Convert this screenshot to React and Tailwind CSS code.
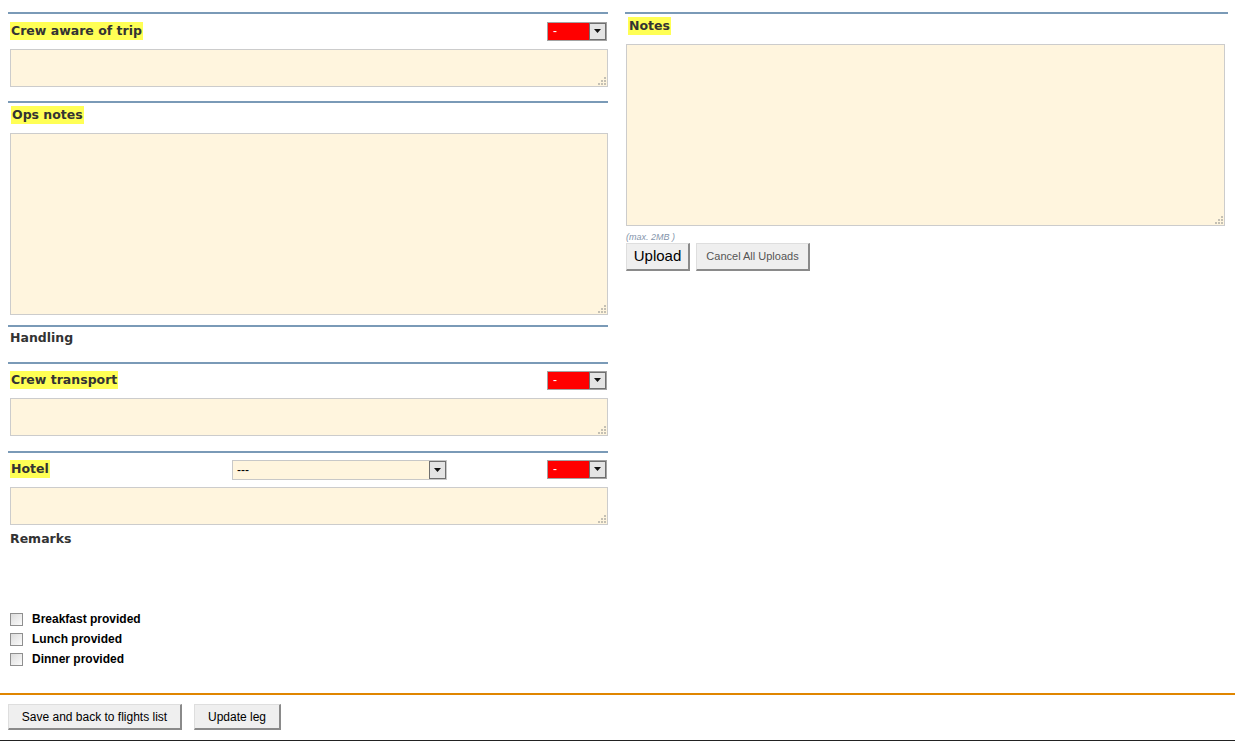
import React from "react";

// small dotted grip drawn in the bottom-right corner of each text box
function Grip() {
  const dots = [
    [6, 0],
    [3, 3],
    [6, 3],
    [0, 6],
    [3, 6],
    [6, 6],
  ];
  return (
    <svg
      className="pointer-events-none absolute right-[2px] bottom-[2px]"
      width="8"
      height="8"
    >
      {dots.map(([x, y], i) => (
        <rect key={i} x={x} y={y} width="2" height="2" fill="#c4c0b4" />
      ))}
    </svg>
  );
}

function NoteBox({ className }) {
  return (
    <div className={"relative " + className}>
      <textarea className="block h-full w-full resize-none border border-[#cccccc] bg-[#fff5de] outline-none" />
      <Grip />
    </div>
  );
}

function Arrow() {
  return (
    <svg width="7" height="4" viewBox="0 0 7 4">
      <path d="M0 0h7L3.5 4z" fill="#111" />
    </svg>
  );
}

function StatusSelect() {
  return (
    <div className="mr-[1px] flex h-[19px] w-[60px] border border-[#a3a3a3] bg-[#ff0000]">
      <span className="flex-1 pl-[5px] font-['Liberation_Sans'] text-[12px] leading-[16px] text-white">
        -
      </span>
      <span className="flex w-[17px] items-center justify-center border border-[#6f6f6f] bg-[#e4e4e4]">
        <Arrow />
      </span>
    </div>
  );
}

function Tag({ children, className = "" }) {
  return (
    <span
      className={
        "block h-[18px] w-fit bg-[#ffff55] px-[1px] font-['DejaVu_Sans'] text-[12.5px] leading-[18px] font-bold text-[#333] " +
        className
      }
    >
      {children}
    </span>
  );
}

function Plain({ children, className = "" }) {
  return (
    <div
      className={
        "h-[18px] pl-[2px] font-['DejaVu_Sans'] text-[12.5px] leading-[18px] font-bold text-[#333] " +
        className
      }
    >
      {children}
    </div>
  );
}

function Check({ label }) {
  return (
    <label className="flex h-[18px] items-center">
      <span className="ml-[2px] h-[13px] w-[13px] border border-[#8f8f8f] bg-gradient-to-br from-[#dcdcdc] to-[#fbfbfb]" />
      <span className="ml-[9px] font-['Liberation_Sans'] text-[12px] font-bold text-black">
        {label}
      </span>
    </label>
  );
}

function Button({ children, className = "text-[12px] text-black" }) {
  return (
    <button
      className={
        "border-t border-l border-r-2 border-b-2 border-t-[#dedede] border-l-[#dedede] border-r-[#8a8a8a] border-b-[#8a8a8a] bg-[#efefef] font-['Liberation_Sans'] " +
        className
      }
    >
      {children}
    </button>
  );
}

export default function App() {
  return (
    <div className="h-[741px] w-[1235px] overflow-hidden bg-white">
      <div className="flex pt-[12px]">
        {/* left column */}
        <div className="ml-[8px] w-[600px]">
          <section className="border-t-2 border-[#7a9ab7] pt-[7px]">
            <div className="flex h-[20px] items-center justify-between">
              <Tag className="ml-[2px]">Crew aware of trip</Tag>
              <StatusSelect />
            </div>
            <NoteBox className="mt-[8px] ml-[2px] h-[38px]" />
          </section>

          <section className="mt-[14px] border-t-2 border-[#7a9ab7] pt-[3px]">
            <Tag className="ml-[3px]">Ops notes</Tag>
            <NoteBox className="mt-[9px] ml-[2px] h-[182px]" />
          </section>

          <section className="mt-[10px] h-[37px] border-t-2 border-[#7a9ab7] pt-[2px]">
            <Plain>Handling</Plain>
          </section>

          <section className="border-t-2 border-[#7a9ab7] pt-[6px]">
            <div className="flex h-[20px] items-center justify-between">
              <Tag className="ml-[2px]">Crew transport</Tag>
              <StatusSelect />
            </div>
            <NoteBox className="mt-[8px] ml-[2px] h-[38px]" />
          </section>

          <section className="mt-[15px] border-t-2 border-[#7a9ab7] pt-[6px]">
            <div className="flex h-[20px] items-center">
              <div className="w-[224px]">
                <Tag className="ml-[2px]">Hotel</Tag>
              </div>
              <div className="mt-[2px] flex h-[20px] w-[215px] border border-[#c8c8c8] bg-[#fff5de]">
                <span className="flex-1 pl-[4px] font-['Liberation_Sans'] text-[12px] leading-[18px] text-black">
                  ---
                </span>
                <span className="flex w-[17px] items-center justify-center border border-[#6f6f6f] bg-[#e4e4e4]">
                  <Arrow />
                </span>
              </div>
              <div className="flex-1" />
              <StatusSelect />
            </div>
            <NoteBox className="mt-[8px] ml-[2px] h-[38px]" />
            <Plain className="mt-[5px]">Remarks</Plain>
          </section>

          <div className="mt-[62px] flex flex-col gap-[2px]">
            <Check label="Breakfast provided" />
            <Check label="Lunch provided" />
            <Check label="Dinner provided" />
          </div>
        </div>

        {/* right column */}
        <div className="ml-[17px] w-[603px]">
          <section className="border-t-2 border-[#7a9ab7] pt-[3px]">
            <Tag className="ml-[3px]">Notes</Tag>
            <NoteBox className="mt-[9px] ml-[1px] h-[182px] w-[599px]" />
            <div className="mt-[5px] ml-[1px] font-['Liberation_Sans'] text-[9px] leading-[12px] text-[#8494ab] italic">
              (max. 2MB )
            </div>
            <div className="ml-[1px] flex gap-[6px]">
              <Button className="h-[28px] w-[64px] text-[15px] text-black">Upload</Button>
              <Button className="h-[28px] w-[114px] text-[11px] text-[#555]">
                Cancel All Uploads
              </Button>
            </div>
          </section>
        </div>
      </div>

      {/* footer */}
      <div className="mt-[25px] h-[48px] border-t-2 border-b border-t-[#e08600] border-b-[#222] pt-[9px]">
        <div className="ml-[8px] flex gap-[12px]">
          <Button className="h-[26px] w-[174px] text-[12px] text-black">
            Save and back to flights list
          </Button>
          <Button className="h-[26px] w-[87px] text-[12px] text-black">Update leg</Button>
        </div>
      </div>
    </div>
  );
}
